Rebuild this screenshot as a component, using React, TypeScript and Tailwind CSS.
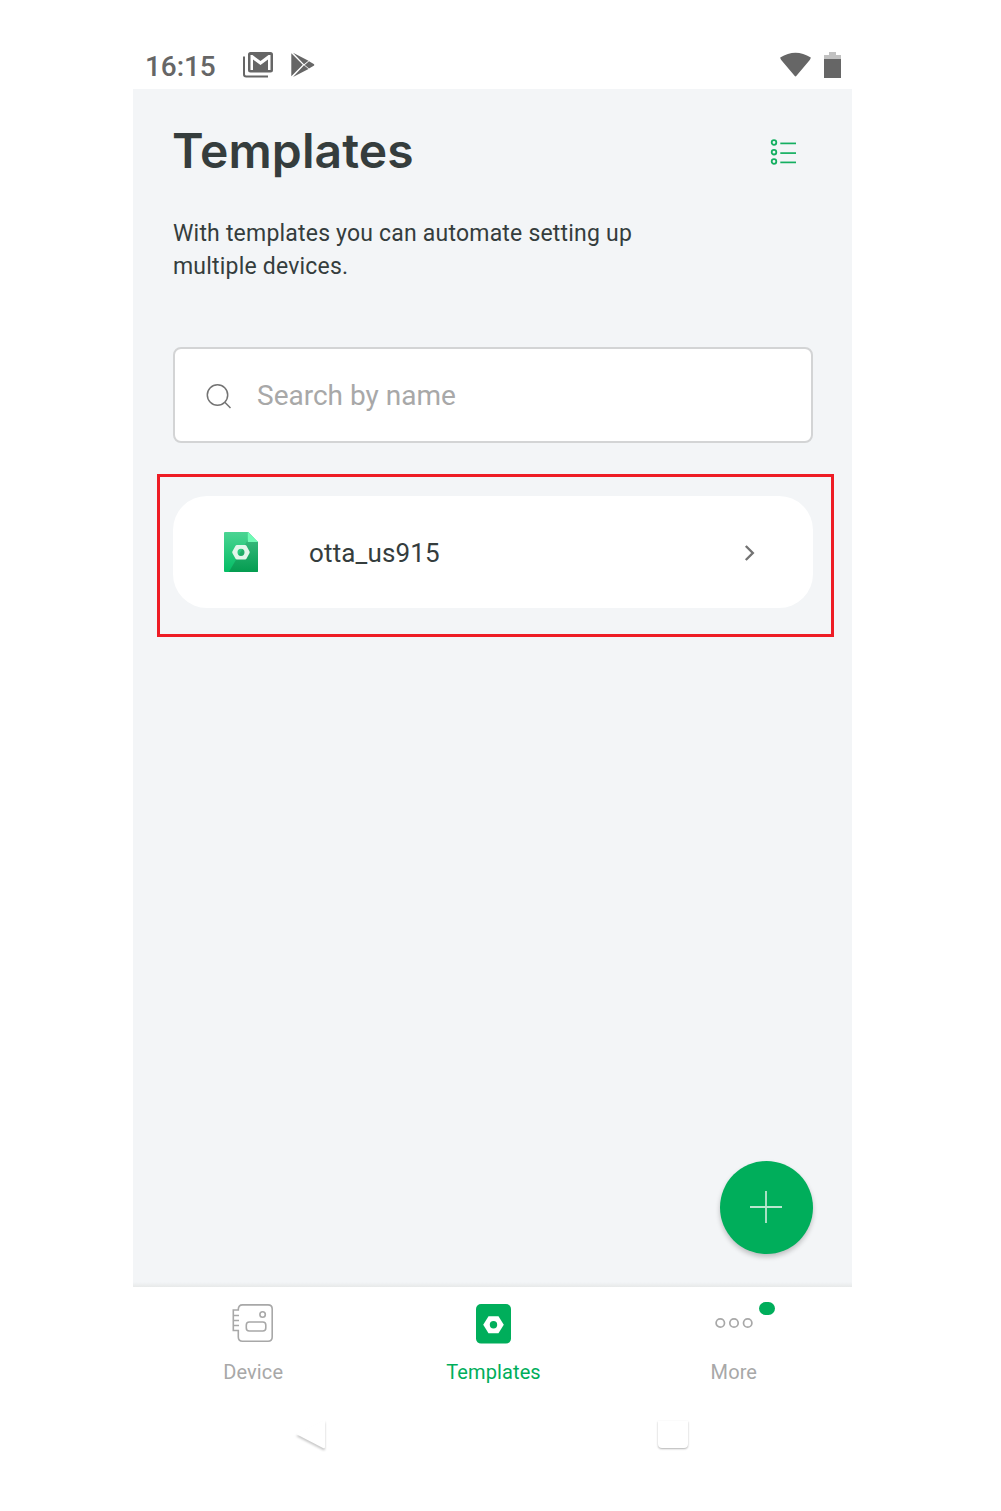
import type { ReactNode } from "react";

function StatusBar() {
  return (
    <header className="flex h-[89px] items-start pl-3 pr-[10px] text-[#666666]">
      <span className="mt-[51px] w-[98px] whitespace-nowrap text-[28px] font-medium leading-8 tracking-[-0.1px]">
        16:15
      </span>
      <svg className="mt-[52px]" width="30" height="26" viewBox="0 0 30 26" fill="none">
        <path d="M1 4.5V22.2Q1 24.5 3.2 24.5H25" stroke="currentColor" strokeWidth="2" />
        <path
          fillRule="evenodd"
          fill="currentColor"
          d="M7.5 0H27.5Q30 0 30 2.5V18Q30 20.5 27.5 20.5H7.5Q5 20.5 5 18V2.5Q5 0 7.5 0ZM7.500 3V18H10V7.500L17.500 13L25 7.500V18H27.500V3H25.500L17.500 9L9.500 3Z"
        />
      </svg>
      <svg className="ml-[18px] mt-[52px]" width="24" height="26" viewBox="0 0 24 26">
        <path
          fill="currentColor"
          d="M0.300 1.200L11.800 12.700L0.300 24.200ZM2 0.700L17.500 8.700L13 12.300ZM2 25L13 13.300L17.500 17ZM13.700 12.900L18 9.300L22.300 11.700Q24.300 12.900 22.300 14.100L18 16.500Z"
        />
      </svg>
      <svg className="ml-auto mt-[52px]" width="31" height="26" viewBox="0 0 32 26" preserveAspectRatio="none">
        <path fill="currentColor" d="M0.200 5.500Q16-4.200 31.800 5.500Q31.500 7 30.500 8.200L17 23.800Q16 25 15 23.800L1.500 8.200Q0.400 7 0.200 5.500Z" />
      </svg>
      <svg className="ml-[13px] mt-[52px]" width="18" height="26" viewBox="0 0 18 26">
        <path fill="#c1c1c1" d="M5 0H12V3H17V8H0V3H5Z" />
        <path fill="currentColor" d="M0 7H17V26H0Z" />
      </svg>
    </header>
  );
}

function ListIcon() {
  return (
    <svg className="mt-0.5" width="28" height="28" viewBox="0 0 28 28" fill="none" stroke="#14af60">
      {[4.5, 14.2, 23.5].map((y) => (
        <g key={y}>
          <circle cx="4" cy={y} r="2.300" strokeWidth="1.800" />
          <path d={`M10.300 ${y + 0.9}H26`} strokeWidth="1.700" />
        </g>
      ))}
    </svg>
  );
}

function TemplateFileIcon() {
  return (
    <svg width="34" height="41" viewBox="0 0 35 41" preserveAspectRatio="none">
      <defs>
        <linearGradient id="page" x1="0" y1="0" x2="0" y2="1">
          <stop offset="0" stopColor="#4bd493" />
          <stop offset="1" stopColor="#03bd64" />
        </linearGradient>
        <linearGradient id="shade" x1="0" y1="0" x2="0" y2="1">
          <stop offset="0" stopColor="#37b97c" />
          <stop offset="1" stopColor="#049c50" />
        </linearGradient>
      </defs>
      <path fill="url(#page)" d="M1 0H25L35 10V39Q35 40 34 40H1Q0 40 0 39V1Q0 0 1 0Z" />
      <path fill="url(#shade)" d="M25 7L35 10V39Q35 40 34 40H5L17 20Z" />
      <path fill="#70fbb5" d="M24.500 0L35 10H24.500Z" />
      <path
        fill="#e2f6eb"
        fillRule="evenodd"
        d="M13.200 13H21.800Q22.600 13 23.100 13.800L26.300 19.600Q26.600 20.300 26.300 21L23.100 26.800Q22.600 27.600 21.800 27.600H13.200Q12.400 27.600 11.900 26.800L8.600 21Q8.300 20.300 8.600 19.600L11.900 13.800Q12.400 13 13.200 13ZM17.500 16.700A3.600 3.600 0 1 0 17.500 23.900A3.600 3.600 0 1 0 17.500 16.700Z"
      />
    </svg>
  );
}

function DeviceIcon() {
  return (
    <svg width="42" height="40" viewBox="0 0 42 40" fill="none" stroke="#a8a8a8" strokeWidth="1.600">
      <path d="M6.300 5.700V5.500Q6.300 0.900 10.500 0.900H36Q40.200 0.900 40.200 5.100V33Q40.200 37.200 36 37.200H10.500Q6.300 37.200 6.300 33V26.500H1.300V6H6.300ZM1.300 11.500H7M1.300 16.500H7M1.300 21.500H7" />
      <circle cx="30.600" cy="10.500" r="2.700" />
      <rect x="14.300" y="18" width="19.500" height="9" rx="3" />
    </svg>
  );
}

function TemplatesIcon() {
  return (
    <svg width="35" height="40" viewBox="0 0 35 40">
      <rect width="35" height="39.600" rx="5" fill="#00ae5b" />
      <path fill="#fff" d="M12.500 12.200H22.500L27.800 20.800L22.500 29.300H12.500L7.200 20.800Z" />
      <circle cx="17.500" cy="20.700" r="3.700" fill="#00ae5b" />
    </svg>
  );
}

function MoreIcon() {
  return (
    <div className="relative">
      <svg width="38" height="40" viewBox="0 0 38 40" fill="none" stroke="#a8a8a8" strokeWidth="1.700">
        <circle cx="5.300" cy="19" r="4.200" />
        <circle cx="19" cy="19" r="4.200" />
        <circle cx="32.700" cy="19" r="4.200" />
      </svg>
      <span className="absolute -right-[22px] -top-0.5 h-[13px] w-4 rounded-full bg-[#00ae5b]" />
    </div>
  );
}

function NavItem({ icon, label, active = false }: { icon: ReactNode; label: string; active?: boolean }) {
  return (
    <button className={`flex flex-1 flex-col items-center pt-[17px] ${active ? "text-[#00ae5b]" : "text-[#a8a8a8]"}`}>
      <span className="block h-10">{icon}</span>
      <span className="mt-4 text-[20px] leading-6 tracking-[0.12px]">{label}</span>
    </button>
  );
}

export default function App() {
  return (
    <div className="h-[1511px] w-full overflow-hidden bg-white pl-[133px] font-['Roboto',sans-serif]">
      <div className="flex w-[719px] flex-col">
        <StatusBar />
        <main className="flex h-[1198px] flex-col bg-[#f3f5f7] bg-[linear-gradient(to_top,#e7e9e9,#f3f5f7_5px)] pl-10 pr-[39px]">
          <div className="mt-[34px] flex h-14 items-center justify-between pr-[15px]">
            <h1 className="-ml-px font-['Inter',sans-serif] text-[48px] font-semibold leading-[56px] tracking-[0.1px] text-[#353d3d]">
              Templates
            </h1>
            <ListIcon />
          </div>
          <p className="mt-[38px] text-[23px] leading-[33px] tracking-[0.2px] text-[#353d3d]">
            With templates you can automate setting up
            <br />
            multiple devices.
          </p>
          <label className="mt-16 flex h-24 shrink-0 items-center rounded-lg border-2 border-[#d3d4d5] bg-white pl-[31px] pt-0.5">
            <svg width="27" height="27" viewBox="0 0 27 27" fill="none" stroke="#737373" strokeWidth="1.500">
              <circle cx="11.500" cy="12" r="10.200" />
              <path d="M18.800 19.200L24.500 25" />
            </svg>
            <span className="ml-6 text-[28px] leading-8 text-[#a8a8a8]">Search by name</span>
          </label>
          <section className="-ml-4 -mr-[21px] mt-[31px] h-[163px] shrink-0 border-[3px] border-[#ee1c25] pl-[13px] pr-[18px] pt-[19px]">
            <button className="flex h-28 w-full items-center rounded-[34px] bg-white pl-[51px] pr-[57px]">
              <TemplateFileIcon />
              <span className="ml-[51px] pt-0.5 text-[26px] leading-8 tracking-[0.15px] text-[#353d3d]">otta_us915</span>
              <svg className="ml-auto mt-0.5" width="13" height="18" viewBox="0 0 13 18" fill="none" stroke="#737373" strokeWidth="2.400">
                <path d="M2.800 2L9.800 9L2.800 16" />
              </svg>
            </button>
          </section>
          <button className="mb-[33px] ml-auto mt-auto flex size-[93px] shrink-0 items-center justify-center rounded-full bg-[#00ae5b] pb-px pr-px shadow-[0_3px_5px_rgba(0,0,0,0.22)]">
            <svg width="32" height="32" viewBox="0 0 32 32" stroke="#b9e6cf" strokeWidth="1.800">
              <path d="M0 16H32M16 0V32" />
            </svg>
          </button>
        </main>
        <nav className="flex h-[130px] w-[721px]">
          <NavItem icon={<DeviceIcon />} label="Device" />
          <NavItem icon={<TemplatesIcon />} label="Templates" active />
          <NavItem icon={<MoreIcon />} label="More" />
        </nav>
        <footer className="flex h-10 pl-[161px]">
          <svg width="36" height="40" viewBox="0 0 36 40" className="drop-shadow-[0_2px_1px_rgba(0,0,0,0.22)]">
            <path fill="#fff" d="M2 17L29 31Q31 32 31 30V3Z" />
          </svg>
          <div className="ml-[328px] mt-1 h-[27px] w-[30px] rounded-b-[4px] bg-white shadow-[0_1px_2px_rgba(0,0,0,0.3)]" />
        </footer>
      </div>
    </div>
  );
}
